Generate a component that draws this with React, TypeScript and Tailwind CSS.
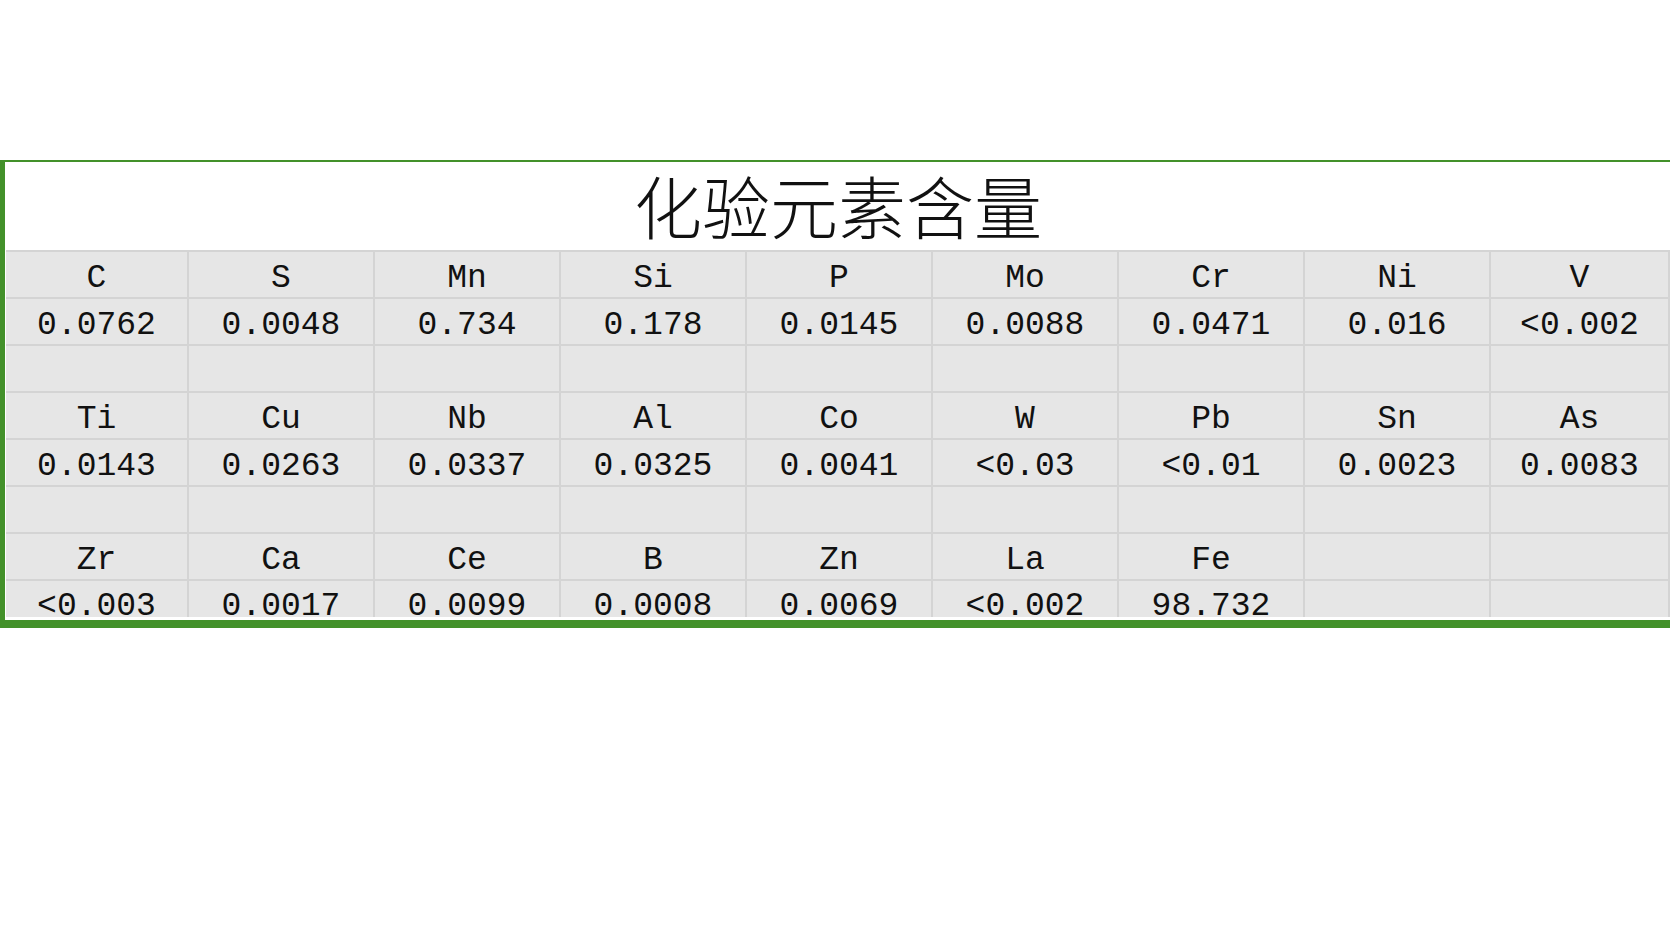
import React from "react";

const rows: string[][] = [
  ["C", "S", "Mn", "Si", "P", "Mo", "Cr", "Ni", "V"],
  ["0.0762", "0.0048", "0.734", "0.178", "0.0145", "0.0088", "0.0471", "0.016", "<0.002"],
  ["", "", "", "", "", "", "", "", ""],
  ["Ti", "Cu", "Nb", "Al", "Co", "W", "Pb", "Sn", "As"],
  ["0.0143", "0.0263", "0.0337", "0.0325", "0.0041", "<0.03", "<0.01", "0.0023", "0.0083"],
  ["", "", "", "", "", "", "", "", ""],
  ["Zr", "Ca", "Ce", "B", "Zn", "La", "Fe", "", ""],
  ["<0.003", "0.0017", "0.0099", "0.0008", "0.0069", "<0.002", "98.732", "", ""],
];

function App() {
  return (
    <div className="w-[1670px] h-[940px] bg-white pt-[160px]">
      <div className="border-t-2 border-l-[5px] border-b-[8px] border-[#43912a]">
        <div className="bg-white pl-px pb-[3px]">
          <div className="h-[88px] flex items-center justify-center pb-[2px]">
            <h1
              className="text-[68px] leading-none text-[#111] font-light"
              style={{ fontFamily: '"Noto Sans CJK SC", sans-serif' }}
            >
              化验元素含量
            </h1>
          </div>
          <div className="bg-[#e6e6e6] border-r-2 border-[#d4d4d4]">
            <div
              className="grid grid-cols-[181px_repeat(7,186px)_1fr] text-[33px] text-[#111]"
              style={{ fontFamily: '"Liberation Mono", monospace' }}
            >
              {rows.map((row, r) =>
                row.map((cell, c) => (
                  <div
                    key={r + "-" + c}
                    className={
                      "border-t-2 border-[#d4d4d4] flex items-end justify-center whitespace-pre " +
                      (r === rows.length - 1 ? "h-[38px] leading-[20px] " : "h-[47px] leading-[33px] pb-[2px] ") +
                      (c > 0 ? "border-l-2" : "")
                    }
                  >
                    {cell}
                  </div>
                ))
              )}
            </div>
          </div>
        </div>
      </div>
    </div>
  );
}

export default App;
